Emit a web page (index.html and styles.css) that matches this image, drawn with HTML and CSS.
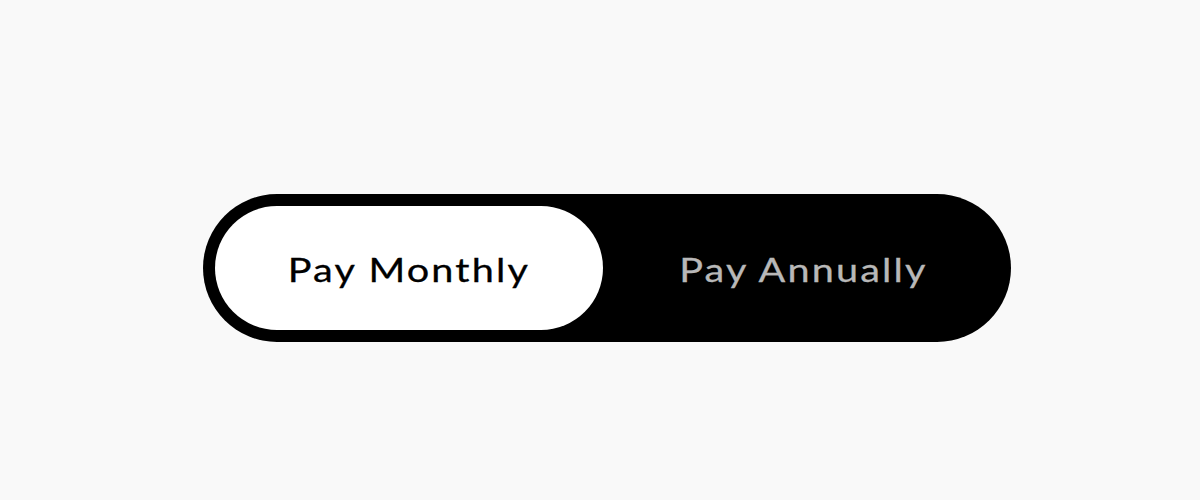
FILE: index.html
```html
<!DOCTYPE html>
<html>
<head>
<meta charset="utf-8">
<link rel="stylesheet" href="styles.css">
</head>
<body>
<div class="stage">
  <div class="toggle">
    <div class="opt active"><span class="label">Pay Monthly</span></div>
    <div class="opt"><span class="label">Pay Annually</span></div>
  </div>
</div>
</body>
</html>
```
FILE: styles.css
```css
html, body {
  margin: 0;
  padding: 0;
  background: #f9f9f9;
}
.stage {
  width: 1200px;
  height: 500px;
  display: flex;
  align-items: flex-start;
  padding-top: 194px;
  padding-left: 203px;
  box-sizing: border-box;
}
.toggle {
  width: 808px;
  height: 148px;
  box-sizing: border-box;
  padding: 12px;
  background: #000;
  border-radius: 74px;
  display: flex;
}
.opt {
  width: 392px;
  height: 124px;
  display: flex;
  align-items: center;
  justify-content: center;
  font-family: Lato, "DejaVu Sans", sans-serif;
  font-size: 33px;
  letter-spacing: 1.8px;
  color: #b8b8b8;
  padding-top: 1px;
  box-sizing: border-box;
}
.label {
  display: inline-block;
  transform: scaleX(1.2);
  -webkit-text-stroke: 0.3px currentColor;
}
.opt.active {
  width: 388px;
  background: #fff;
  color: #000;
  border-radius: 62px;
  margin-right: 4px;
}
```
